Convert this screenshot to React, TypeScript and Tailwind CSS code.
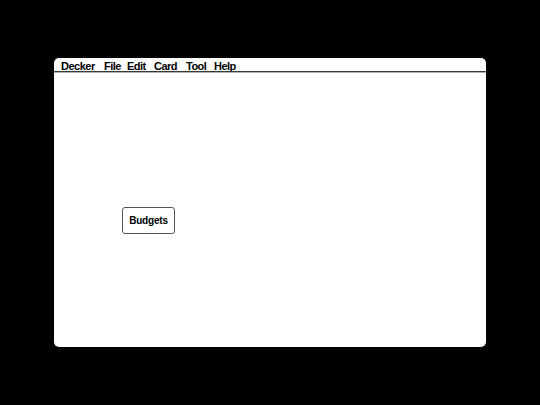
const menus = [
  { label: "Decker", width: "w-[43px]" },
  { label: "File", width: "w-[23px]" },
  { label: "Edit", width: "w-[27px]" },
  { label: "Card", width: "w-[32px]" },
  { label: "Tool", width: "w-[28px]" },
  { label: "Help", width: "w-[30px]" },
];

function MenuBar() {
  return (
    <div className="flex h-[13px] shrink-0 items-start pl-[7px] pt-[3px] text-[11px] font-bold leading-[11px] tracking-[-0.5px] text-black">
      {menus.map((m) => (
        <span className={`${m.width} shrink-0 whitespace-nowrap`} key={m.label}>
          {m.label}
        </span>
      ))}
    </div>
  );
}

export default function App() {
  return (
    <div
      className="h-[405px] w-[540px] bg-black pl-[54px] pt-[58px]"
      style={{ fontFamily: '"Liberation Sans", Arial, sans-serif' }}
    >
      <div className="flex h-[289px] w-[432px] flex-col overflow-hidden rounded-[5px] bg-white">
        <MenuBar />
        <div className="h-px shrink-0 bg-[#3a3a3a]" />
        <div className="h-px shrink-0 bg-[#b0b0b0]" />
        <div className="relative flex-1">
          <button
            className="absolute left-[68px] top-[134px] flex h-[27px] w-[53px] items-center justify-center rounded-[3px] border border-[#555] bg-white text-[10px] font-bold tracking-[-0.2px] text-black"
            type="button"
          >
            Budgets
          </button>
        </div>
      </div>
    </div>
  );
}
